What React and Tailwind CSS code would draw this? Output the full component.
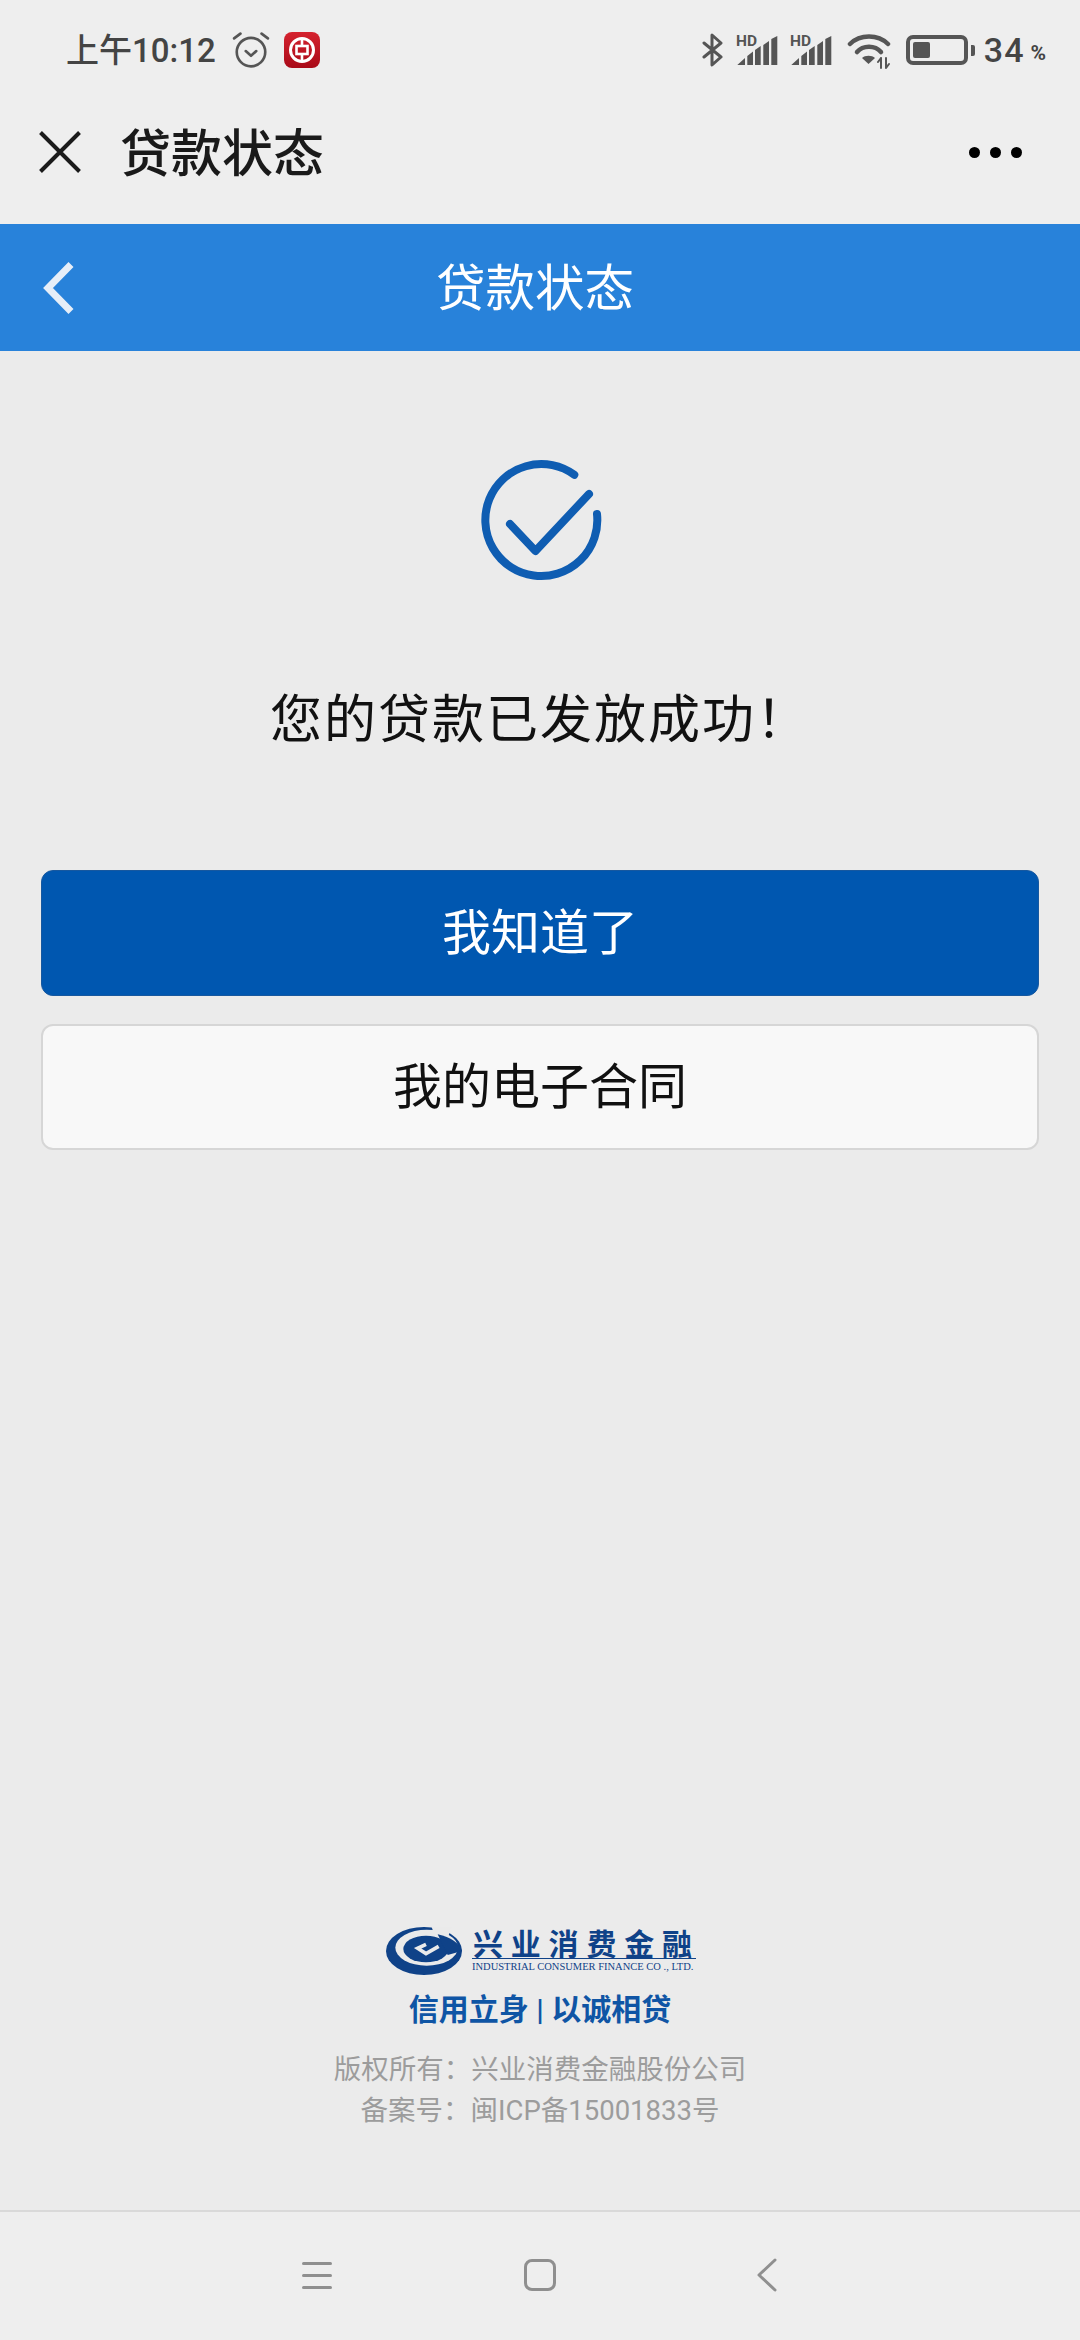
const cjk = 'font-["Roboto","Noto_Sans_CJK_SC",sans-serif]'

function Signal() {
  return (
    <svg width="42" height="36" viewBox="0 -4 42 36" className="shrink-0 mb-[4px]">
      <text x="0" y="12" fontSize="15.5" fontWeight="700" fill="#555" fontFamily="Roboto, sans-serif">HD</text>
      <path d="M1.3 31 L9 24 V31 Z M11.3 31 V22 L17 17.5 V31 Z M19 31 V16 L24.7 12 V31 Z M27.3 31 V11 L33 7 V31 Z M35.3 31 V5 L41.3 2 V31 Z" fill="#555" />
    </svg>
  )
}

function StatusBar() {
  return (
    <div className="h-[100px] flex items-center pl-[66px] pr-[34px] text-[#444]">
      <span className={`${cjk} text-[33px] font-medium leading-none`}>上午10:12</span>
      <svg width="38" height="38" viewBox="0 0 36 36" className="ml-[16px]" fill="none" stroke="#555" strokeWidth="2.5" strokeLinecap="round" strokeLinejoin="round">
        <circle cx="18" cy="20" r="13.5" />
        <path d="M13 19 L18 23.5 L23 19" />
        <path d="M2 7 L8 2.5 M34 7 L28 2.5" />
      </svg>
      <svg width="36" height="36" viewBox="0 0 36 36" className="ml-[14px]">
        <defs>
          <linearGradient id="boc" x1="0" y1="0" x2="0" y2="1">
            <stop offset="0" stopColor="#d5222e" />
            <stop offset="1" stopColor="#a90a18" />
          </linearGradient>
        </defs>
        <rect width="36" height="36" rx="8" fill="url(#boc)" />
        <circle cx="18" cy="18" r="11.5" fill="none" stroke="#fff" strokeWidth="3" />
        <rect x="12.5" y="14" width="11" height="8" fill="none" stroke="#fff" strokeWidth="2.6" />
        <path d="M18 7 V14 M18 22 V29" stroke="#fff" strokeWidth="2.6" />
      </svg>

      <div className="ml-auto flex items-center">
        <svg width="22" height="34" viewBox="0 0 22 34" fill="none" stroke="#555" strokeWidth="3" strokeLinecap="round" strokeLinejoin="round">
          <path d="M2 10 L19 24 L10 32 V2 L19 10 L2 24" />
        </svg>
        <div className="ml-[12px]"><Signal /></div>
        <div className="ml-[12px]"><Signal /></div>
        <svg width="44" height="36" viewBox="0 0 44 36" className="ml-[15px] mt-[2px]" fill="none">
          <path d="M3 11 C13 1 31 1 41 11" stroke="#555" strokeWidth="4.5" strokeLinecap="round" />
          <path d="M10 19 C16 12 28 12 34 19" stroke="#555" strokeWidth="4.5" strokeLinecap="round" />
          <path d="M15 25 C18 22 25 22 28 25 L21.5 31 Z" fill="#555" />
          <path d="M34 25 V35 M34 25 L31 29 M39 35 V25 M39 35 L42 31" stroke="#555" strokeWidth="2" strokeLinecap="round" />
        </svg>
        <div className="ml-[15px] flex items-center">
          <div className="w-[62px] h-[30px] rounded-[7px] border-[4px] border-[#555] p-[3px]">
            <div className="w-[17px] h-full bg-[#555] rounded-[2px]"></div>
          </div>
          <div className="w-[4px] h-[11px] ml-[3px] bg-[#555] rounded-r-[2px]"></div>
        </div>
        <span className="ml-[9px] font-['Roboto',sans-serif] text-[34px] font-medium leading-none tracking-[1px]">34</span>
        <span className="ml-[6px] mt-[6px] font-['Roboto',sans-serif] text-[21px] font-bold leading-none">%</span>
      </div>
    </div>
  )
}

function LogoMark() {
  return (
    <svg width="76" height="48" viewBox="30 36 228 144" className="shrink-0">
      <ellipse cx="144" cy="108" rx="114" ry="72" fill="#0f4288" />
      <ellipse cx="152" cy="98" rx="94" ry="54" fill="#eaeaea" />
      <path d="M165 30 H228 L215 70 L175 60 Z" fill="#eaeaea" />
      <ellipse cx="150" cy="102" rx="68" ry="40" fill="#0f4288" />
      <path d="M185 58 C225 66 250 85 258 108 L215 120 Z" fill="#0f4288" />
      <path d="M150 88 L125 100 L150 116 L188 94" fill="none" stroke="#eaeaea" strokeWidth="11" strokeLinejoin="miter" />
    </svg>
  )
}

function Footer() {
  return (
    <div className="flex flex-col items-center pb-[79px]">
      <div className="flex items-start gap-[10px] h-[50px] pl-[2px]">
        <LogoMark />
        <div className="w-[224px] flex flex-col">
          <div className="h-[32px] flex justify-between pl-[1px] pr-[4px] border-b border-[#0f4288] text-[30px] leading-[30px] font-bold text-[#0f4288] font-['Noto_Sans_CJK_SC',sans-serif]">
            <span>兴</span><span>业</span><span>消</span><span>费</span><span>金</span><span>融</span>
          </div>
          <div className="mt-[2px] font-['Liberation_Serif',serif] text-[10.5px] leading-[12px] whitespace-nowrap text-[#0f4288]">INDUSTRIAL CONSUMER FINANCE CO ., LTD.</div>
        </div>
      </div>
      <div className={`${cjk} mt-[9px] text-[30px] leading-[48px] font-semibold text-[#0f55a5]`}>信用立身 | 以诚相贷</div>
      <div className={`${cjk} mt-[15px] text-[27.5px] leading-[41px] text-[#9c9c9c] text-center`}>
        <div>版权所有：兴业消费金融股份公司</div>
        <div>备案号：闽ICP备15001833号</div>
      </div>
    </div>
  )
}

function BottomNav() {
  return (
    <div className="h-[130px] bg-[#eeeeee] border-t-2 border-[#d9d9d9] flex items-center">
      <div className="w-full flex items-center pl-[302px] pb-[2px]">
        <div className="w-[30px] flex flex-col gap-[9px]">
          <div className="h-[3px] rounded-full bg-[#8f8f8f]"></div>
          <div className="h-[3px] rounded-full bg-[#8f8f8f]"></div>
          <div className="h-[3px] rounded-full bg-[#8f8f8f]"></div>
        </div>
        <div className="ml-[192px] w-[32px] h-[32px] rounded-[8px] border-[3px] border-[#8f8f8f]"></div>
        <svg width="20" height="34" viewBox="0 0 20 34" className="ml-[201px]" fill="none" stroke="#8f8f8f" strokeWidth="3" strokeLinecap="round" strokeLinejoin="round">
          <path d="M18 2 L2 17 L18 32" />
        </svg>
      </div>
    </div>
  )
}

export default function App() {
  return (
    <div className={`${cjk} w-[1080px] h-[2340px] flex flex-col bg-[#ebebeb] overflow-hidden`}>
      {/* WeChat chrome */}
      <div className="h-[224px] bg-[#eeeeee] shrink-0">
        <StatusBar />
        <div className="h-[104px] flex items-center pl-[39px] pr-[58px]">
          <svg width="42" height="42" viewBox="0 0 42 42" fill="none" stroke="#1a1a1a" strokeWidth="4">
            <path d="M1.5 1.5 L40.5 40.5 M40.5 1.5 L1.5 40.5" />
          </svg>
          <span className="ml-[39px] pt-[4px] text-[51px] leading-none font-medium text-[#1a1a1a]">贷款状态</span>
          <div className="ml-auto flex gap-[10px]">
            <div className="w-[11px] h-[11px] rounded-full bg-black"></div>
            <div className="w-[11px] h-[11px] rounded-full bg-black"></div>
            <div className="w-[11px] h-[11px] rounded-full bg-black"></div>
          </div>
        </div>
      </div>

      <div className="h-[127px] shrink-0 bg-[#2882da] flex items-center pl-[42px] pr-[84px]">
        <svg width="32" height="52" viewBox="0 0 32 52" fill="none" stroke="#e6eef8" strokeWidth="7">
          <path d="M29 2.5 L6 26 L29 49.5" />
        </svg>
        <div className="flex-1 pt-[4px] text-center text-[49.5px] leading-none text-white">贷款状态</div>
      </div>

      <div className="flex-1 flex flex-col">
        <div className="flex justify-center pt-[108px] pl-[4px]">
          <svg width="122" height="124" viewBox="0 0 122 124" fill="none" stroke="#0f5db2" strokeWidth="8" strokeLinecap="round" strokeLinejoin="round">
            <path d="M93.3 15.8 A56 56 0 1 0 116 55" />
            <path d="M29 65 L54.5 92 L108 35" />
          </svg>
        </div>
        <div className="mt-[102px] text-center text-[52px] leading-[72px] text-[#111] tracking-[2px]">您的贷款已发放成功！</div>
        <div className="mt-[113px] px-[41px] flex flex-col gap-[28px]">
          <div className="h-[126px] pt-[2px] rounded-[12px] bg-[#0057b0] border border-[#17589f] flex items-center justify-center text-[49px] text-white">我知道了</div>
          <div className="h-[126px] pt-[2px] rounded-[12px] bg-[#f8f8f8] border-2 border-[#d6d6d6] flex items-center justify-center text-[49px] text-[#111]">我的电子合同</div>
        </div>
        <div className="flex-1"></div>
        <Footer />
      </div>

      <BottomNav />
    </div>
  )
}
